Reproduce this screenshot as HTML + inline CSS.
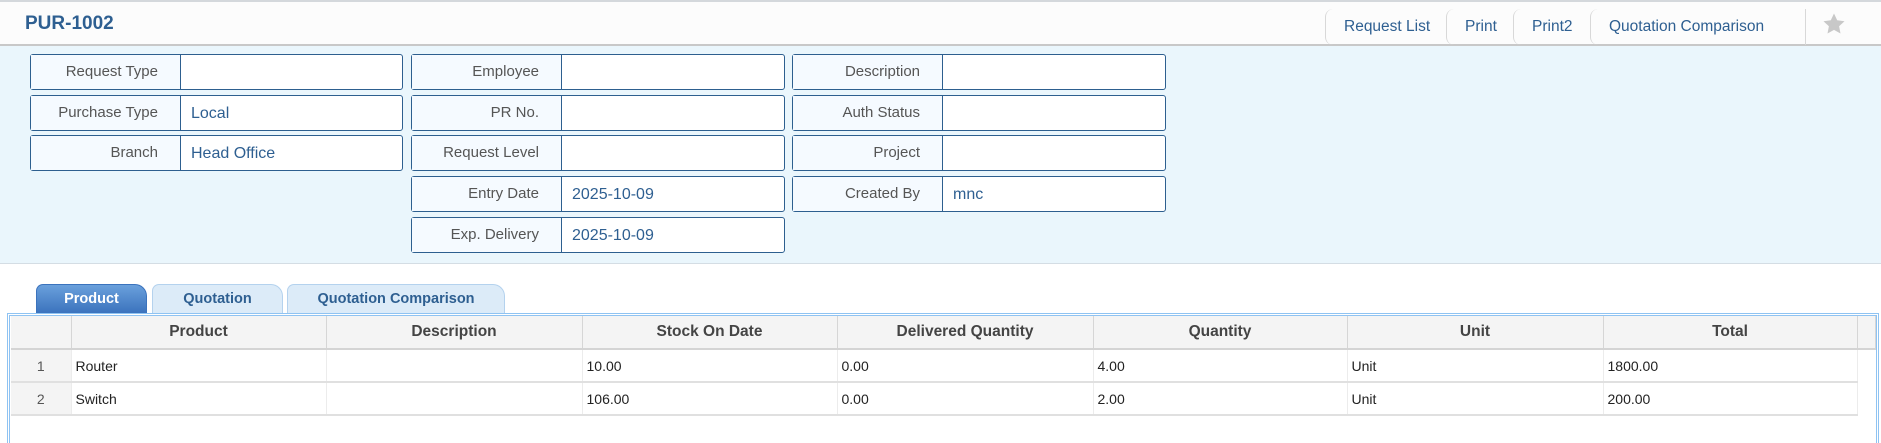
<!DOCTYPE html>
<html><head><meta charset="utf-8"><style>
*{box-sizing:border-box;margin:0;padding:0}
body{width:1881px;height:438px;overflow:hidden;background:#fff;font-family:"Liberation Sans",sans-serif;position:relative}
.top{position:absolute;left:0;top:0;width:1881px;height:46px;border-top:2px solid #d4d8dc;border-bottom:2px solid #c8c8c8;background:#fcfcfc}
.title{position:absolute;left:25px;top:11px;font-size:19px;font-weight:bold;color:#2e5f91}
.btn{position:absolute;top:7px;height:36px;border-left:1px solid #d8d8d8;border-radius:8px 0 0 8px;color:#2e5f91;font-size:15.5px;line-height:36px;padding-left:18px}
.panel{position:absolute;left:0;top:46px;width:1881px;height:218px;background:#eaf6fc;border-bottom:1px solid #d4dde4}
.f{position:absolute;height:36px;border:1.5px solid #2d5f8f;border-radius:3px;background:#fff;display:flex;font-size:15px}
.f .l{width:150px;border-right:1.5px solid #2d5f8f;background:#f5faff;color:#555;text-align:right;padding-right:22px;line-height:34px}
.f .v{flex:1;color:#2e5f91;padding-left:10px;line-height:36px;font-size:16px}
.tab{position:absolute;top:284px;height:29px;border:1px solid #b4d2ee;border-bottom:none;border-radius:7px 12px 0 0;background:#dcebf8;color:#2e5f91;font-weight:bold;font-size:14.5px;text-align:center;line-height:28px}
.tab.a{background:linear-gradient(#6aa0dc,#3b73bd);color:#fff;border-color:#3b73bd}
.tbl{position:absolute;left:7px;top:313px;width:1872px;height:130px;border:3px double #8fc3f2;border-bottom:none}
table{border-collapse:collapse;position:absolute;left:1px;top:0px;font-size:14px}
th{background:#f4f4f4;color:#444;font-size:15.5px;height:33px;border-right:1px solid #d6d6d6;border-bottom:2px solid #d4d4d4}
td{height:33px;border-bottom:2px solid #e0e0e0;border-right:1px solid #ececec;color:#222;padding-left:4px}
td.n{background:#f4f4f4;text-align:center;color:#555;padding:0}
</style></head><body>
<div class="top">
<div class="title">PUR-1002</div>
<div class="btn" style="left:1325px;width:122px">Request List</div>
<div class="btn" style="left:1446px;width:68px">Print</div>
<div class="btn" style="left:1513px;width:78px">Print2</div>
<div class="btn" style="left:1590px;width:216px">Quotation Comparison</div>
<div class="btn" style="left:1805px;width:76px;border-radius:0"></div>
<svg style="position:absolute;left:1822px;top:10px" width="24" height="24" viewBox="0 0 24 24"><path d="M12 1.5l3.2 6.8 7.3.9-5.4 5 1.4 7.3L12 17.9l-6.5 3.6 1.4-7.3-5.4-5 7.3-.9z" fill="#c8c8c8"/></svg>
</div>
<div class="panel"></div>
<div class="f" style="left:30px;top:54px;width:373px"><div class="l">Request Type</div><div class="v"></div></div>
<div class="f" style="left:30px;top:95px;width:373px"><div class="l">Purchase Type</div><div class="v">Local</div></div>
<div class="f" style="left:30px;top:135px;width:373px"><div class="l">Branch</div><div class="v">Head Office</div></div>
<div class="f" style="left:411px;top:54px;width:374px"><div class="l">Employee</div><div class="v"></div></div>
<div class="f" style="left:411px;top:95px;width:374px"><div class="l">PR No.</div><div class="v"></div></div>
<div class="f" style="left:411px;top:135px;width:374px"><div class="l">Request Level</div><div class="v"></div></div>
<div class="f" style="left:411px;top:176px;width:374px"><div class="l">Entry Date</div><div class="v">2025-10-09</div></div>
<div class="f" style="left:411px;top:217px;width:374px"><div class="l">Exp. Delivery</div><div class="v">2025-10-09</div></div>
<div class="f" style="left:792px;top:54px;width:374px"><div class="l">Description</div><div class="v"></div></div>
<div class="f" style="left:792px;top:95px;width:374px"><div class="l">Auth Status</div><div class="v"></div></div>
<div class="f" style="left:792px;top:135px;width:374px"><div class="l">Project</div><div class="v"></div></div>
<div class="f" style="left:792px;top:176px;width:374px"><div class="l">Created By</div><div class="v">mnc</div></div>
<div class="tab a" style="left:36px;width:111px">Product</div>
<div class="tab" style="left:152px;width:131px">Quotation</div>
<div class="tab" style="left:287px;width:218px">Quotation Comparison</div>
<div class="tbl">
<table>
<tr><th style="width:60px"></th><th style="width:255px">Product</th><th style="width:256px">Description</th><th style="width:255px">Stock On Date</th><th style="width:256px">Delivered Quantity</th><th style="width:254px">Quantity</th><th style="width:256px">Unit</th><th style="width:254px">Total</th><th style="width:18px"></th></tr>
<tr><td class="n">1</td><td>Router</td><td></td><td>10.00</td><td>0.00</td><td>4.00</td><td>Unit</td><td>1800.00</td><td style="border:none"></td></tr>
<tr><td class="n">2</td><td>Switch</td><td></td><td>106.00</td><td>0.00</td><td>2.00</td><td>Unit</td><td>200.00</td><td style="border:none"></td></tr>
</table>
</div>
</body></html>
